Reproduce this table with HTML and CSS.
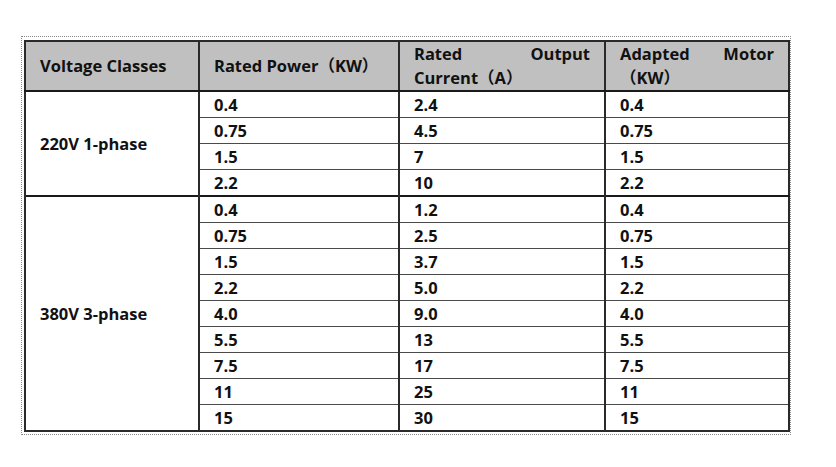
FILE: index.html
```html
<!DOCTYPE html>
<html>
<head>
<meta charset="utf-8">
<link rel="stylesheet" href="styles.css">
</head>
<body>
<div class="frame">
<table class="spec">
  <colgroup>
    <col class="c1"><col class="c2"><col class="c3"><col class="c4">
  </colgroup>
  <thead>
    <tr>
      <th class="one">Voltage Classes</th>
      <th class="one">Rated Power（KW）</th>
      <th class="two">Rated Output Current（A）</th>
      <th class="two">Adapted Motor （KW）</th>
    </tr>
  </thead>
  <tbody class="grp">
    <tr><td class="label" rowspan="4">220V 1-phase</td><td>0.4</td><td>2.4</td><td>0.4</td></tr>
    <tr><td>0.75</td><td>4.5</td><td>0.75</td></tr>
    <tr><td>1.5</td><td>7</td><td>1.5</td></tr>
    <tr><td>2.2</td><td>10</td><td>2.2</td></tr>
  </tbody>
  <tbody class="grp">
    <tr><td class="label" rowspan="9">380V 3-phase</td><td>0.4</td><td>1.2</td><td>0.4</td></tr>
    <tr><td>0.75</td><td>2.5</td><td>0.75</td></tr>
    <tr><td>1.5</td><td>3.7</td><td>1.5</td></tr>
    <tr><td>2.2</td><td>5.0</td><td>2.2</td></tr>
    <tr><td>4.0</td><td>9.0</td><td>4.0</td></tr>
    <tr><td>5.5</td><td>13</td><td>5.5</td></tr>
    <tr><td>7.5</td><td>17</td><td>7.5</td></tr>
    <tr><td>11</td><td>25</td><td>11</td></tr>
    <tr><td>15</td><td>30</td><td>15</td></tr>
  </tbody>
</table>
</div>
</body>
</html>
```
FILE: styles.css
```css
html, body {
  margin: 0;
  padding: 0;
  background: #ffffff;
}
body {
  font-family: "Open Sans", "Noto Sans CJK SC", sans-serif;
  font-weight: 700;
  font-size: 16.5px;
  color: #111111;
}
.frame {
  margin: 36px 0 0 21px;
  width: 764px;
  padding: 3px 2px 2px 2px;
  border: 1px dotted #8a8a8a;
}
.spec {
  border-collapse: collapse;
  width: 764px;
  table-layout: fixed;
  border: 2px solid #2a2a2a;
}
.c1 { width: 174px; }
.c2 { width: 200px; }
.c3 { width: 206px; }
.c4 { width: 184px; }
.spec th {
  background: #c0c0c0;
  height: 48px;
  padding: 0 14px 0 14px;
  border-left: 2px solid #2a2a2a;
  border-bottom: 2px solid #1a1a1a;
  text-align: left;
  vertical-align: middle;
  font-weight: 700;
  line-height: 24px;
}
.spec th.two {
  text-align: justify;
  text-align-last: left;
}
.spec td {
  height: 25px;
  padding: 0 14px;
  line-height: 25px;
  border-left: 2px solid #2a2a2a;
  border-top: 1px solid #4a4a4a;
  vertical-align: middle;
}
.spec tbody.grp {
  border-top: 2px solid #1a1a1a;
}
.spec td.label {
  vertical-align: middle;
}
```
